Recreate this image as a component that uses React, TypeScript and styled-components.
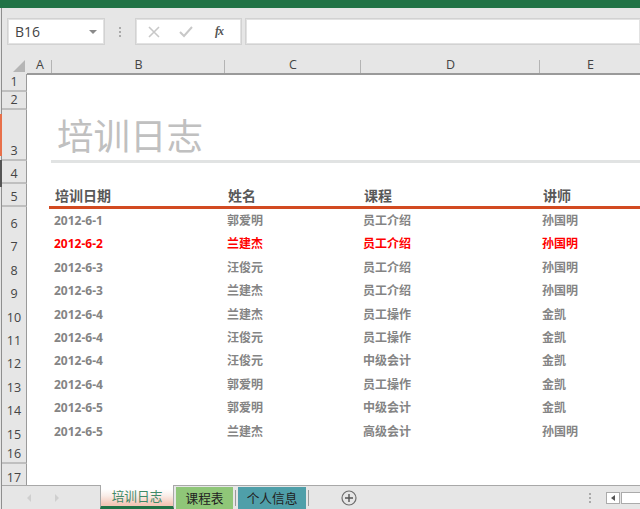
import React from 'react';
import styled, { createGlobalStyle } from 'styled-components';

const GlobalStyle = createGlobalStyle`
  html, body {
    margin: 0;
    padding: 0;
    background: #fff;
  }
`;

const COLUMNS = '25px 24px 173px 136px 179px 101px';
const FONT = '"Noto Sans", "Noto Sans CJK SC", sans-serif';

const Window = styled.div`
  width: 640px;
  height: 509px;
  overflow: hidden;
  display: flex;
  flex-direction: column;
  position: relative;
  box-sizing: border-box;
  padding-left: 2px;
  background: #e6e6e6;
  font-family: ${FONT};
  &::before {
    content: '';
    position: absolute;
    left: 1px;
    top: 8px;
    bottom: 0;
    width: 1px;
    background: #8f8f8f;
  }
`;

const EdgeMark = styled.span<{ $top: number; $height: number; $color: string }>`
  position: absolute;
  left: 0;
  top: ${({ $top }) => $top}px;
  height: ${({ $height }) => $height}px;
  width: 2px;
  background: ${({ $color }) => $color};
`;

const TitleBar = styled.div`
  height: 8px;
  margin-left: -2px;
  background: #217346;
  flex: none;
`;

const FormulaBar = styled.div`
  height: 47px;
  flex: none;
  box-sizing: border-box;
  padding: 10px 0 10px 5px;
  display: flex;
  align-items: stretch;
  background: #e6e6e6;
`;

const FieldBox = styled.div`
  box-sizing: border-box;
  background: #fff;
  border: 1px solid #d2d2d2;
  box-shadow: inset 0 0 0 1px #e2e2e2;
  display: flex;
  align-items: center;
`;

const NameBox = styled(FieldBox)`
  width: 98px;
  padding: 0 7px;
  justify-content: space-between;
  font-size: 14px;
  color: #444;
  font-family: "Open Sans", sans-serif;
`;

const Caret = styled.span`
  width: 0;
  height: 0;
  border-left: 4px solid transparent;
  border-right: 4px solid transparent;
  border-top: 4px solid #8a8a8a;
`;

const Grip = styled.div`
  width: 30px;
  flex: none;
  display: flex;
  flex-direction: column;
  align-items: center;
  justify-content: center;
  gap: 2px;
`;

const GripDot = styled.span`
  width: 2px;
  height: 2px;
  background: #aaa;
`;

const FormulaButtons = styled(FieldBox)`
  width: 107px;
  padding-left: 12px;
  gap: 19px;
  flex: none;
`;

const FxLabel = styled.span`
  font-family: "Liberation Serif", serif;
  font-style: italic;
  font-weight: bold;
  font-size: 12px;
  letter-spacing: -1px;
  color: #555;
  margin-left: 3px;
`;

const FormulaInput = styled(FieldBox)`
  flex: 1;
  margin-left: 3px;
  border-right: 0;
`;

const GridRow = styled.div<{ $height: number; $frozen?: boolean }>`
  display: grid;
  grid-template-columns: ${COLUMNS};
  height: ${({ $height }) => $height}px;
  flex: none;
  background: ${({ $frozen }) => ($frozen ? '#e6e6e6' : '#fff')};
`;

const Corner = styled.div`
  display: flex;
  align-items: flex-end;
  justify-content: flex-end;
  padding: 0 2px 2px 0;
  box-sizing: border-box;
  border-bottom: 1px solid #9a9a9a;
`;

const ColHead = styled.div`
  display: flex;
  align-items: center;
  justify-content: center;
  box-sizing: border-box;
  font-size: 12.5px;
  color: #444;
  font-family: "Open Sans", sans-serif;
  padding: 1px 0 0 2px;
  border-bottom: 2px solid #9a9a9a;
  position: relative;
  &::after {
    content: '';
    position: absolute;
    right: -1px;
    bottom: 0;
    height: 13px;
    width: 1px;
    background: #b4b4b4;
  }
`;

const RowHead = styled.div`
  box-sizing: border-box;
  background: #e6e6e6;
  border-bottom: 2px solid #bfbfbf;
  border-right: 1px solid #9a9a9a;
  font-family: "Open Sans", sans-serif;
  font-size: 12.5px;
  color: #444;
  display: flex;
  align-items: flex-end;
  justify-content: center;
  line-height: 16px;
`;

const TitleCell = styled.div`
  grid-column: 3 / 7;
  position: relative;
  z-index: 1;
  box-sizing: border-box;
  border-bottom: 3px solid #e1e3e3;
  margin-bottom: -2px;
  padding-left: 6px;
  padding-bottom: 3px;
  font-size: 36.5px;
  line-height: 44px;
  color: #c0c0c0;
  font-family: "Noto Sans CJK SC", sans-serif;
  font-weight: 400;
  display: flex;
  align-items: flex-end;
`;

const HeaderRule = styled.div`
  grid-column: 2 / 7;
  grid-row: 1;
  height: 3px;
  margin-left: 22px;
  background: #d24a21;
  align-self: end;
  margin-bottom: -2px;
  position: relative;
`;

const HeaderCell = styled.div<{ $col: number }>`
  grid-column: ${({ $col }) => $col};
  grid-row: 1;
  padding-left: 4px;
  font-size: 14px;
  font-weight: 700;
  color: #595959;
  font-family: "Noto Sans CJK SC", sans-serif;
  line-height: 23px;
  white-space: nowrap;
`;

const DataCell = styled.div<{ $alert?: boolean }>`
  padding-left: 3px;
  font-size: 12px;
  font-weight: 700;
  color: ${({ $alert }) => ($alert ? '#ff0000' : '#848484')};
  line-height: 27px;
  white-space: nowrap;
`;

const Spacer = styled.div``;

const TabBar = styled.div`
  position: absolute;
  left: 2px;
  right: 0;
  bottom: 0;
  height: 24px;
  box-sizing: border-box;
  border-top: 1px solid #a8a8a8;
  background: #e6e6e6;
  display: flex;
  align-items: stretch;
`;

const NavArrows = styled.div`
  width: 98px;
  flex: none;
  box-sizing: border-box;
  padding-left: 25px;
  display: flex;
  align-items: center;
  gap: 24px;
`;

const NavArrow = styled.span<{ $right?: boolean }>`
  width: 0;
  height: 0;
  border-top: 4px solid transparent;
  border-bottom: 4px solid transparent;
  ${({ $right }) => ($right ? 'border-left: 4px solid #cfcfcf;' : 'border-right: 4px solid #cfcfcf;')}
`;

const ActiveTab = styled.div`
  width: 74px;
  flex: none;
  box-sizing: border-box;
  background: linear-gradient(#fff 20%, #faeee9 50%, #f4c6b6 92%);
  border-left: 1px solid #a8a8a8;
  border-right: 1px solid #a8a8a8;
  border-bottom: 3px solid #217346;
  margin-top: -1px;
  padding-bottom: 1px;
  color: #3f8a68;
  font-family: "Noto Sans CJK SC", sans-serif;
  font-size: 12.7px;
  display: flex;
  align-items: center;
  justify-content: center;
`;

const Tab = styled.div<{ $color: string; $width: number }>`
  width: ${({ $width }) => $width}px;
  flex: none;
  margin: 1px 0 0 2px;
  background: ${({ $color }) => $color};
  color: #222;
  font-family: "Noto Sans CJK SC", sans-serif;
  font-size: 12.7px;
  display: flex;
  align-items: center;
  justify-content: center;
  padding-bottom: 2px;
`;

const TabDivider = styled.span`
  width: 1px;
  flex: none;
  margin: 4px 0 3px 2px;
  background: #9a9a9a;
`;

const AddSheet = styled.div`
  width: 16px;
  flex: none;
  margin-left: 32px;
  display: flex;
  align-items: center;
  justify-content: center;
`;

const BarTail = styled.div`
  flex: 1;
  display: flex;
  align-items: center;
  justify-content: flex-end;
`;

const TailGrip = styled(Grip)`
  width: 16px;
  margin-right: 8px;
`;

const ScrollButton = styled.div`
  width: 14px;
  height: 12px;
  box-sizing: border-box;
  border: 1px solid #ababab;
  background: #fff;
  display: flex;
  align-items: center;
  justify-content: center;
`;

const ScrollArrow = styled.span`
  width: 0;
  height: 0;
  border-top: 3px solid transparent;
  border-bottom: 3px solid transparent;
  border-right: 4px solid #555;
`;

const ScrollTrack = styled.div`
  width: 19px;
  height: 12px;
  box-sizing: border-box;
  margin-left: 1px;
  border: 1px solid #ababab;
  border-right: 0;
  background: #fff;
`;

const columnLetters = ['A', 'B', 'C', 'D', 'E'];
const headers = ['培训日期', '姓名', '课程', '讲师'];

const records = [
  ['2012-6-1', '郭爱明', '员工介绍', '孙国明'],
  ['2012-6-2', '兰建杰', '员工介绍', '孙国明'],
  ['2012-6-3', '汪俊元', '员工介绍', '孙国明'],
  ['2012-6-3', '兰建杰', '员工介绍', '孙国明'],
  ['2012-6-4', '兰建杰', '员工操作', '金凯'],
  ['2012-6-4', '汪俊元', '员工操作', '金凯'],
  ['2012-6-4', '汪俊元', '中级会计', '金凯'],
  ['2012-6-4', '郭爱明', '员工操作', '金凯'],
  ['2012-6-5', '郭爱明', '中级会计', '金凯'],
  ['2012-6-5', '兰建杰', '高级会计', '孙国明'],
];

const ROW_H = 23.4;

export default function App() {
  return (
    <Window>
      <GlobalStyle />
      <EdgeMark $top={114} $height={42} $color="#e8704a" />
      <EdgeMark $top={160} $height={27} $color="#555" />
      <TitleBar />
      <FormulaBar>
        <NameBox>
          B16
          <Caret />
        </NameBox>
        <Grip>
          <GripDot />
          <GripDot />
          <GripDot />
        </Grip>
        <FormulaButtons>
          <svg width="12" height="12" viewBox="0 0 12 12">
            <path d="M1 1l10 10M11 1L1 11" stroke="#c8c8c8" strokeWidth="1.6" fill="none" />
          </svg>
          <svg width="14" height="12" viewBox="0 0 14 12">
            <path d="M1 6l4 4 8-9" stroke="#c8c8c8" strokeWidth="2" fill="none" />
          </svg>
          <FxLabel>fx</FxLabel>
        </FormulaButtons>
        <FormulaInput />
      </FormulaBar>

      <GridRow $height={19} $frozen>
        <Corner>
          <svg width="12" height="12" viewBox="0 0 12 12">
            <path d="M12 0v12H0z" fill="#b5b5b5" />
          </svg>
        </Corner>
        {columnLetters.map((c) => (
          <ColHead key={c}>{c}</ColHead>
        ))}
      </GridRow>

      <GridRow $height={18}>
        <RowHead>1</RowHead>
      </GridRow>
      <GridRow $height={18}>
        <RowHead>2</RowHead>
      </GridRow>
      <GridRow $height={51}>
        <RowHead>3</RowHead>
        <Spacer />
        <TitleCell>培训日志</TitleCell>
      </GridRow>
      <GridRow $height={23}>
        <RowHead>4</RowHead>
      </GridRow>
      <GridRow $height={23}>
        <RowHead>5</RowHead>
        {headers.map((h, i) => (
          <HeaderCell key={h} $col={i + 3}>
            {h}
          </HeaderCell>
        ))}
        <HeaderRule />
      </GridRow>
      {records.map((record, i) => (
        <GridRow key={i} $height={ROW_H}>
          <RowHead>{i + 6}</RowHead>
          <Spacer />
          {record.map((value, j) => (
            <DataCell key={j} $alert={i === 1}>
              {value}
            </DataCell>
          ))}
        </GridRow>
      ))}
      <GridRow $height={ROW_H}>
        <RowHead>16</RowHead>
      </GridRow>
      <GridRow $height={ROW_H}>
        <RowHead>17</RowHead>
      </GridRow>

      <TabBar>
        <NavArrows>
          <NavArrow />
          <NavArrow $right />
        </NavArrows>
        <ActiveTab>培训日志</ActiveTab>
        <Tab $color="#8fc678" $width={57}>课程表</Tab>
        <TabDivider />
        <Tab $color="#4f9fa9" $width={68}>个人信息</Tab>
        <TabDivider />
        <AddSheet>
          <svg width="16" height="16" viewBox="0 0 16 16">
            <circle cx="8" cy="8" r="7" stroke="#6e6e6e" strokeWidth="1.2" fill="none" />
            <path d="M8 4v8M4 8h8" stroke="#555" strokeWidth="1.4" />
          </svg>
        </AddSheet>
        <BarTail>
          <TailGrip>
            <GripDot />
            <GripDot />
            <GripDot />
          </TailGrip>
          <ScrollButton>
            <ScrollArrow />
          </ScrollButton>
          <ScrollTrack />
        </BarTail>
      </TabBar>
    </Window>
  );
}
